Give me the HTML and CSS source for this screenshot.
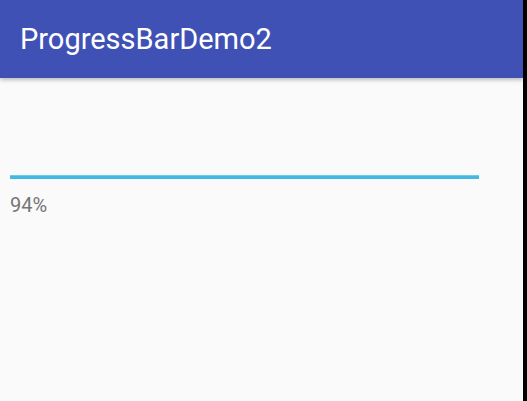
FILE: index.html
```html
<!DOCTYPE html>
<html lang="en">
<head>
    <meta charset="UTF-8">
    <meta name="viewport" content="width=device-width, initial-scale=1.0">
    <title>ProgressBarDemo2</title>
    <link rel="stylesheet" href="styles.css">
</head>
<body>
    <div class="screen">
        <header class="app-bar">
            <h1>ProgressBarDemo2</h1>
        </header>
        <main class="content">
            <div class="progress">
                <div class="progress-fill" style="width: 94%;"></div>
            </div>
            <p class="progress-label">94%</p>
        </main>
    </div>
    <div class="edge"></div>
</body>
</html>
```

FILE: styles.css
```css
body {
    font-family: Roboto, 'Noto Sans', sans-serif;
    margin: 0;
    padding: 0;
    height: 401px;
    display: flex;
    overflow: hidden;
    background-color: #000000;
}
.screen {
    width: 523px;
    height: 100%;
    background-color: #fafafa;
    display: flex;
    flex-direction: column;
}
.app-bar {
    height: 78px;
    background-color: #3f51b5;
    display: flex;
    align-items: center;
    padding-left: 20px;
    box-shadow: 0 2px 4px rgba(0, 0, 0, 0.25);
    position: relative;
    z-index: 2;
}
.app-bar h1 {
    margin: 0;
    color: #ffffff;
    font-size: 29px;
    font-weight: 400;
    line-height: 29px;
}
.content {
    padding: 97px 0 0 10px;
}
.progress {
    width: 499px;
    height: 4px;
}
.progress-fill {
    height: 100%;
    background-color: #42b8e2;
    border-top: 1px solid #6ccbeb;
    box-sizing: border-box;
}
.progress-label {
    margin: 16px 0 0;
    color: #757575;
    font-size: 20px;
    line-height: 20px;
}
.edge {
    flex: 1;
    background-color: #000000;
}
```
